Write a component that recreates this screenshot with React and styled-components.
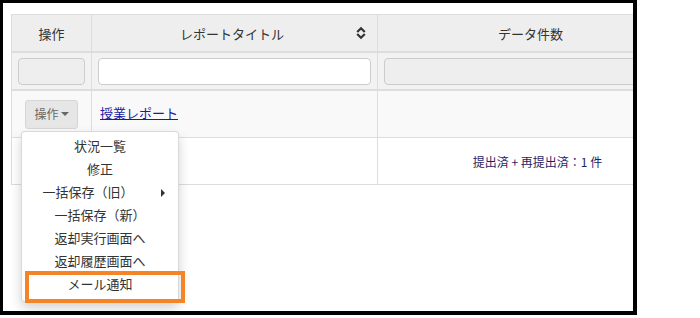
import React from "react";
import styled, { createGlobalStyle } from "styled-components";

const Global = createGlobalStyle`
  html, body { margin: 0; padding: 0; background: #fff; }
  body { font-family: "Noto Sans CJK JP", "Liberation Sans", sans-serif; color: #333; }
  * { box-sizing: border-box; }
`;

const Frame = styled.div`
  position: relative;
  width: 637px;
  height: 315px;
  border-style: solid;
  border-color: #000;
  border-width: 3px 4px 4px 3px;
  overflow: hidden;
  padding: 11px 0 0 8px;
  background: #fff;
`;

const Table = styled.div`
  width: 673px;
  border-top: 1px solid #ddd;
  border-left: 1px solid #ddd;
`;

const Row = styled.div`
  display: grid;
  grid-template-columns: 80px 286px 306px;
  height: ${(p) => p.$h}px;
  background: ${(p) => p.$bg};
  border-bottom: ${(p) => p.$bb}px solid #ddd;
`;

const Cell = styled.div`
  position: relative;
  display: flex;
  align-items: center;
  justify-content: ${(p) => p.$justify || "center"};
  padding: ${(p) => p.$pad || "0 6px"};
  border-right: 1px solid #ddd;
  font-size: 13px;
  color: #333;
`;

const HeadCell = styled(Cell)`
  display: grid;
  grid-template-columns: 1fr auto 1fr;
  align-items: center;
  padding: 0 11px 0 6px;
`;

const HeadTitle = styled.span`
  grid-column: 2;
  font-size: 13px;
  color: #333;
`;

const SortIcon = styled.svg`
  grid-column: 3;
  justify-self: end;
  display: block;
`;

const FilterInput = styled.div`
  width: 100%;
  height: 27px;
  border: 1px solid #ccc;
  border-radius: 4px;
  background: ${(p) => (p.$white ? "#fff" : "#eee")};
`;

const ButtonWrap = styled.div`
  position: relative;
  display: inline-block;
`;

const OpButton = styled.div`
  display: flex;
  align-items: center;
  justify-content: center;
  gap: 2px;
  width: 53px;
  height: 29px;
  padding-bottom: 2px;
  background: #e6e6e6;
  border: 1px solid #d6d6d6;
  border-radius: 3px;
  font-size: 12px;
  color: #666;
`;

const Caret = styled.span`
  display: inline-block;
  width: 0;
  height: 0;
  margin-top: 2px;
  border-left: 4px solid transparent;
  border-right: 4px solid transparent;
  border-top: 4px solid #666;
`;

const Link = styled.a`
  font-size: 13px;
  color: #1a1aa0;
  text-decoration: underline;
  padding-bottom: 3px;
`;

const CountText = styled.span`
  font-size: 12px;
  color: #1e2365;
  padding-left: 14px;
`;

const Menu = styled.div`
  position: absolute;
  top: calc(100% + 2px);
  left: -4px;
  width: 158px;
  padding: 3px 0 5px;
  background: #fff;
  border: 1px solid rgba(0, 0, 0, 0.15);
  border-radius: 4px;
  box-shadow: 0 6px 12px rgba(0, 0, 0, 0.175);
  z-index: 10;
`;

const MenuItem = styled.div`
  position: relative;
  height: 23px;
  line-height: 22px;
  text-align: center;
  font-size: 13px;
  color: #333;
  white-space: nowrap;
  padding-right: ${(p) => (p.$sub ? "24px" : "0")};
`;

const SubCaret = styled.span`
  position: absolute;
  right: 13px;
  top: 8px;
  width: 0;
  height: 0;
  border-top: 4px solid transparent;
  border-bottom: 4px solid transparent;
  border-left: 4px solid #333;
`;

const Highlight = styled.span`
  position: absolute;
  left: 3px;
  right: -7px;
  top: -2px;
  bottom: -7px;
  border: 4px solid #f58426;
  pointer-events: none;
`;

const items = [
  "状況一覧",
  "修正",
  "一括保存（旧）",
  "一括保存（新）",
  "返却実行画面へ",
  "返却履歴画面へ",
  "メール通知",
];

export default function App() {
  return (
    <>
      <Global />
      <Frame>
        <Table>
          <Row $h={38} $bg="#eeeeee" $bb={2}>
            <Cell>操作</Cell>
            <HeadCell>
              <HeadTitle>レポートタイトル</HeadTitle>
              <SortIcon width="10" height="14" viewBox="0 0 10 14">
                <path d="M1.2 6 L5 2.2 L8.8 6" fill="none" stroke="#333" strokeWidth="2.2" />
                <path d="M1.2 8 L5 11.8 L8.8 8" fill="none" stroke="#333" strokeWidth="2.2" />
              </SortIcon>
            </HeadCell>
            <Cell>データ件数</Cell>
          </Row>
          <Row $h={38} $bg="#f2f2f2" $bb={2}>
            <Cell>
              <FilterInput />
            </Cell>
            <Cell>
              <FilterInput $white />
            </Cell>
            <Cell>
              <FilterInput />
            </Cell>
          </Row>
          <Row $h={47} $bg="#f9f9f9" $bb={1}>
            <Cell>
              <ButtonWrap>
                <OpButton>
                  操作
                  <Caret />
                </OpButton>
                <Menu>
                  {items.map((t, i) => (
                    <MenuItem key={t} $sub={i === 2}>
                      {t}
                      {i === 2 && <SubCaret />}
                      {i === items.length - 1 && <Highlight />}
                    </MenuItem>
                  ))}
                </Menu>
              </ButtonWrap>
            </Cell>
            <Cell $justify="flex-start" $pad="0 8px">
              <Link>授業レポート</Link>
            </Cell>
            <Cell />
          </Row>
          <Row $h={47} $bg="#fff" $bb={1}>
            <Cell />
            <Cell />
            <Cell>
              <CountText>提出済 + 再提出済：1 件</CountText>
            </Cell>
          </Row>
        </Table>
      </Frame>
    </>
  );
}
